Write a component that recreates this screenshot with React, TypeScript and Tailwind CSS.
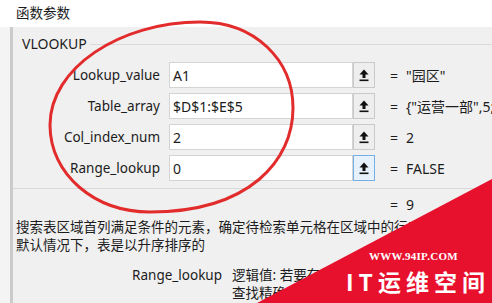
import React from 'react';

const rows = [
  { label: 'Lookup_value', value: 'A1', result: '"园区"', focus: false },
  { label: 'Table_array', value: '$D$1:$E$5', result: '{"运营一部",5;"运营二部",6;"园区",9}', focus: false },
  { label: 'Col_index_num', value: '2', result: '2', focus: false },
  { label: 'Range_lookup', value: '0', result: 'FALSE', focus: true },
];

function UpArrow() {
  return (
    <svg width="10" height="13" viewBox="0 0 10 13" className="fill-[#111]">
      <path d="M5 0.5 L9.5 5.5 H6.5 V9 H3.5 V5.5 H0.5 Z" />
      <rect x="0.5" y="10.5" width="9" height="1.6" />
    </svg>
  );
}

export default function App() {
  return (
    <div
      className="relative w-[492px] h-[303px] overflow-hidden bg-[#f0f0f0] text-[#1c1c1c]"
      style={{ fontFamily: '"Noto Sans", "Noto Sans CJK SC", sans-serif' }}
    >
      <div className="h-[27px] bg-white flex items-center pl-[16px] text-[13.5px]">函数参数</div>

      <div className="flex h-[276px]">
        <div className="w-[10px] shrink-0 bg-[#f4f4f4]" />
        <div className="w-[3px] shrink-0 bg-[#cbcbcb]" />

        <div className="flex-1 flex flex-col min-w-0 overflow-hidden">
          {/* group box */}
          <div className="border-b border-[#d8d8d8] pb-[7px]">
            <div className="mt-[10px] h-[14px] flex items-center pl-[9px]">
              <span className="text-[14px] leading-none">VLOOKUP</span>
              <div className="ml-[3px] flex-1 h-px bg-[#dadada]" />
            </div>
            <div className="mt-[11px] flex flex-col gap-[5px]">
              {rows.map((r) => (
                <div key={r.label} className="h-[26px] flex items-center text-[14px] whitespace-nowrap overflow-hidden">
                  <div className="w-[147px] shrink-0 text-right text-[13.5px]">{r.label}</div>
                  <div className="ml-[9px] w-[184px] shrink-0 h-full bg-white border border-[#d4d4d4] flex items-center pl-[3px]">
                    {r.value}
                  </div>
                  <div
                    className={
                      r.focus
                        ? 'w-[22px] shrink-0 h-full border border-[#79aee2] bg-[#e6f1fb] flex items-center justify-center'
                        : 'w-[22px] shrink-0 h-full border border-[#c9c9c9] bg-[#eeeeee] flex items-center justify-center'
                    }
                  >
                    <UpArrow />
                  </div>
                  <span className="ml-[15px] w-[16px] shrink-0">=</span>
                  <span className="min-w-0 overflow-hidden">{r.result}</span>
                </div>
              ))}
            </div>
          </div>

          <div className="mt-[6px] h-[18px] flex items-center text-[14px]">
            <span className="ml-[377px] w-[16px] shrink-0">=</span>
            <span>9</span>
          </div>

          <div className="mt-[5px] pl-[3px] text-[13.5px] leading-[18px] whitespace-nowrap">
            <div>搜索表区域首列满足条件的元素，确定待检索单元格在区域中的行序号，再进一步返回选定单元格的值。</div>
            <div>默认情况下，表是以升序排序的</div>
          </div>

          <div className="mt-[12px] flex text-[13.5px] leading-[18px] whitespace-nowrap">
            <div className="w-[209px] shrink-0 text-right">Range_lookup</div>
            <div className="ml-[10px] shrink-0">
              <div>逻辑值: 若要在第一列中查找大致匹配，请使用 TRUE 或省略；若要</div>
              <div>查找精确匹配，请使用 FALSE</div>
            </div>
          </div>
        </div>
      </div>

      {/* hand-drawn red circle annotation */}
      <svg className="absolute left-0 top-0 pointer-events-none" width="492" height="303">
        <path
          d="M50 125 C50 68 120 22 200 22 C255 22 293 60 293 108 C293 160 250 212 150 212 C95 212 50 175 50 125 Z"
          fill="none"
          stroke="#e22b2b"
          strokeWidth="3"
        />
      </svg>

      {/* watermark */}
      <svg className="absolute left-0 top-0 pointer-events-none" width="492" height="303">
        <polygon points="492,179 492,303 257,303" fill="#e8112d" />
      </svg>
      <div
        className="absolute left-[369px] top-[251px] text-white text-[11px] font-bold leading-none tracking-[0.3px]"
        style={{ fontFamily: '"Liberation Serif", serif' }}
      >
        WWW.94IP.COM
      </div>
      <div
        className="absolute left-[346px] top-[270px] text-white text-[23px] font-bold leading-none tracking-[5px]"
        style={{ fontFamily: '"Noto Sans CJK SC", sans-serif' }}
      >
        IT运维空间
      </div>
    </div>
  );
}
